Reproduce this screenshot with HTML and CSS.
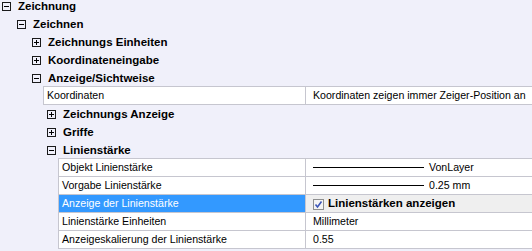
FILE: index.html
```html
<!DOCTYPE html>
<html lang="de">
<head>
    <meta charset="UTF-8">
    <title>Zeichnung - Einstellungen</title>
    <link rel="stylesheet" href="styles.css">
</head>
<body>
    <div class="tree">
        <div class="cat lvl0"><span class="tg"></span><span class="lbl">Zeichnung</span></div>
        <div class="cat lvl1"><span class="tg"></span><span class="lbl">Zeichnen</span></div>
        <div class="cat lvl2"><span class="tg plus"></span><span class="lbl">Zeichnungs Einheiten</span></div>
        <div class="cat lvl2"><span class="tg plus"></span><span class="lbl">Koordinateneingabe</span></div>
        <div class="cat lvl2"><span class="tg"></span><span class="lbl">Anzeige/Sichtweise</span></div>

        <div class="props ind2">
            <div class="prop">
                <div class="name">Koordinaten</div>
                <div class="val">Koordinaten zeigen immer Zeiger-Position an</div>
            </div>
        </div>

        <div class="cat lvl3"><span class="tg plus"></span><span class="lbl">Zeichnungs Anzeige</span></div>
        <div class="cat lvl3"><span class="tg plus"></span><span class="lbl">Griffe</span></div>
        <div class="cat lvl3"><span class="tg"></span><span class="lbl">Linienstärke</span></div>

        <div class="props ind3">
            <div class="prop">
                <div class="name">Objekt Linienstärke</div>
                <div class="val"><span class="sample"></span>VonLayer</div>
            </div>
            <div class="prop">
                <div class="name">Vorgabe Linienstärke</div>
                <div class="val"><span class="sample"></span>0.25 mm</div>
            </div>
            <div class="prop selected">
                <div class="name">Anzeige der Linienstärke</div>
                <div class="val"><span class="check">
                    <svg width="9" height="9" viewBox="0 0 9 9"><path d="M1.5 4.5 L3.5 7 L7.5 1.5" fill="none" stroke="#3d56b8" stroke-width="1.6"/></svg>
                </span><b>Linienstärken anzeigen</b></div>
            </div>
            <div class="prop">
                <div class="name">Linienstärke Einheiten</div>
                <div class="val">Millimeter</div>
            </div>
            <div class="prop">
                <div class="name">Anzeigeskalierung der Linienstärke</div>
                <div class="val">0.55</div>
            </div>
        </div>
    </div>
</body>
</html>
```

FILE: styles.css
```css
body {
    margin: 0;
    background-color: #f0f0fa;
    font-family: "Liberation Sans", Arial, sans-serif;
    font-size: 10.6px;
    color: #000;
    overflow: hidden;
}

.tree {
    margin-top: -3px;
    width: 532px;
}

.cat {
    display: flex;
    align-items: center;
    height: 18px;
}

.cat .lbl {
    font-weight: bold;
    font-size: 11.5px;
    margin-left: 7px;
    white-space: nowrap;
}

.lvl0 { padding-left: 2px; }
.lvl1 { padding-left: 17px; }
.lvl2 { padding-left: 32px; }
.lvl3 { padding-left: 47px; }

/* expand / collapse box */
.tg {
    position: relative;
    width: 9px;
    height: 9px;
    box-sizing: border-box;
    border: 1px solid #1a1a1a;
    flex: none;
    margin-top: 1px;
}

.tg::before {
    content: "";
    position: absolute;
    left: 1px;
    top: 3px;
    width: 5px;
    height: 1px;
    background: #000;
}

.tg.plus::after {
    content: "";
    position: absolute;
    left: 3px;
    top: 1px;
    width: 1px;
    height: 5px;
    background: #000;
}

.props {
    margin-top: -1px;
    border-top: 1px solid #c6c6cf;
    border-left: 1px solid #c6c6cf;
}

.ind2 { margin-left: 43px; }
.ind3 { margin-left: 58px; }

.prop {
    display: flex;
    height: 18px;
    box-sizing: border-box;
    border-bottom: 1px solid #c6c6cf;
    line-height: 17px;
    background: #fff;
    white-space: nowrap;
}

.prop .name {
    flex: 1;
    padding-left: 3px;
}

.prop .val {
    width: 227px;
    box-sizing: border-box;
    border-left: 1px solid #c6c6cf;
    padding-left: 7px;
    display: flex;
    align-items: center;
}

.prop.selected .name {
    background: #3399ff;
    color: #fff;
}

.prop.selected .val {
    background: #efefef;
}

.val b {
    font-size: 11.5px;
    margin-left: 4px;
}

.sample {
    display: inline-block;
    width: 111px;
    height: 1px;
    background: #000;
    margin-right: 5px;
}

.check {
    display: inline-flex;
    align-items: center;
    justify-content: center;
    width: 11px;
    height: 11px;
    box-sizing: border-box;
    border: 1px solid #8e8f8f;
    background: #f4f4f4;
    margin-top: 1px;
}
```
